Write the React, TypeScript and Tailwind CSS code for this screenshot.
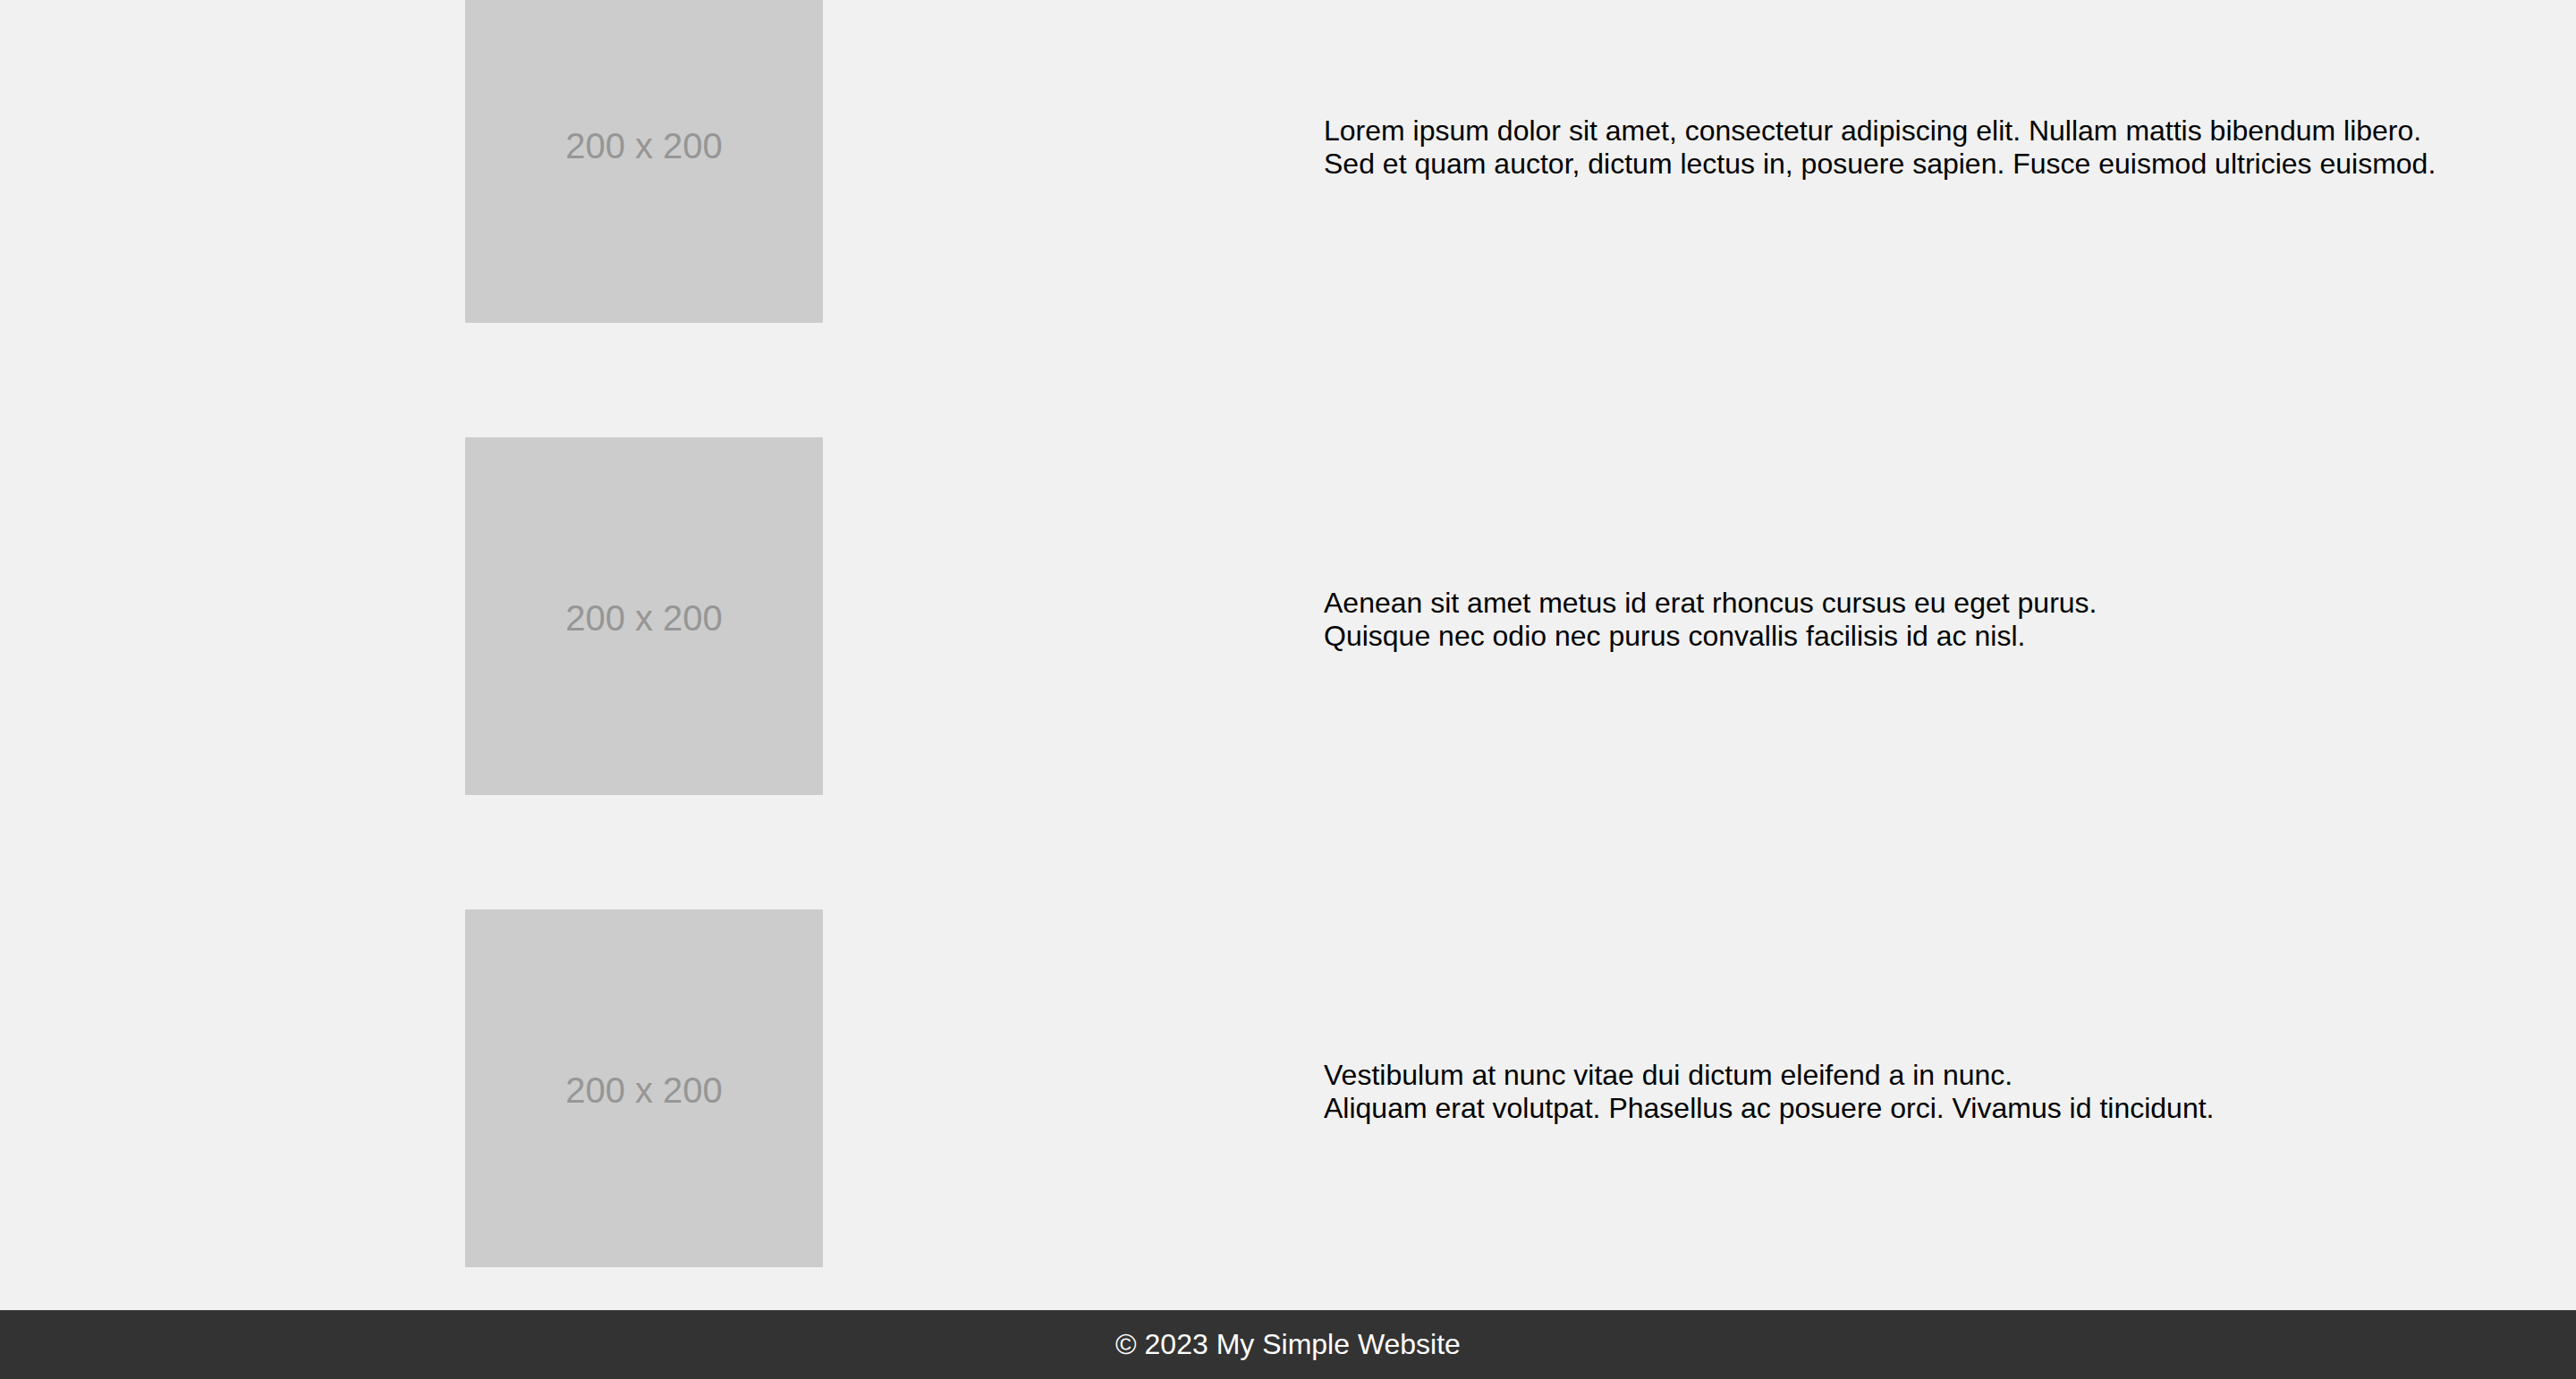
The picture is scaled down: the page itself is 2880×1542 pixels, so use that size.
const rows = [
  {
    lines: [
      'Lorem ipsum dolor sit amet, consectetur adipiscing elit. Nullam mattis bibendum libero.',
      'Sed et quam auctor, dictum lectus in, posuere sapien. Fusce euismod ultricies euismod.',
    ],
  },
  {
    lines: [
      'Aenean sit amet metus id erat rhoncus cursus eu eget purus.',
      'Quisque nec odio nec purus convallis facilisis id ac nisl.',
    ],
  },
  {
    lines: [
      'Vestibulum at nunc vitae dui dictum eleifend a in nunc.',
      'Aliquam erat volutpat. Phasellus ac posuere orci. Vivamus id tincidunt.',
    ],
  },
];

function Placeholder() {
  return (
    <div className="w-[400px] h-[400px] bg-[#cccccc] flex items-center justify-center pt-[4px]">
      <span className="text-[40px] leading-none text-[#969696]">200 x 200</span>
    </div>
  );
}

export default function App() {
  return (
    <div className="min-h-screen overflow-hidden bg-[#f1f1f1] text-black font-['Liberation_Sans',Arial,sans-serif] flex flex-col">
      {/* Content rows */}
      <main className="-mt-[39px] pb-[48px] flex flex-col gap-[128px]">
        {rows.map((row, index) => (
          <section key={index} className="grid grid-cols-2 items-center">
            <div className="flex justify-center">
              <Placeholder />
            </div>
            <p className="pl-[40px] pt-[7px] text-[32px] leading-[1.15]">
              {row.lines[0]}
              <br />
              {row.lines[1]}
            </p>
          </section>
        ))}
      </main>

      {/* Footer */}
      <footer className="bg-[#333333] text-white text-center py-[20px] text-[32px] leading-[1.15]">
        © 2023 My Simple Website
      </footer>
    </div>
  );
}
